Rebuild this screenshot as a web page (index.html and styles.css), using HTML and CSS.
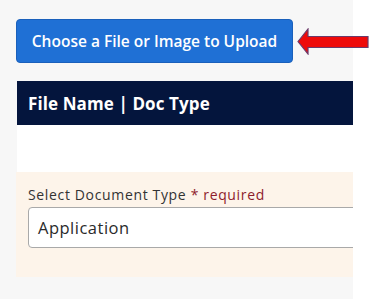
FILE: index.html
```html
<!DOCTYPE html>
<html lang="en">
<head>
<meta charset="utf-8">
<title>Upload</title>
<link rel="stylesheet" href="styles.css">
</head>
<body>
<div class="page">
  <div class="upload-row">
    <button class="upload-btn" type="button">Choose a File or Image to Upload</button>
    <svg class="arrow" width="72" height="27" viewBox="0 0 72 27" aria-hidden="true">
      <polygon points="1,13.5 11,1 11,8.5 71,8.5 71,19.5 11,19.5 11,26" fill="#ee0a0a" stroke="#6b3a6a" stroke-width="1.2" stroke-linejoin="miter"/>
    </svg>
  </div>
  <div class="table-head">File Name | Doc Type</div>
  <div class="spacer"></div>
  <div class="doc-panel">
    <label class="doc-label" for="doctype">Select Document Type <span class="req">* required</span></label>
    <div class="select-box" id="doctype">Application</div>
  </div>
</div>
</body>
</html>
```
FILE: styles.css
```css
html, body {
  margin: 0;
  padding: 0;
  background: #ffffff;
}
body {
  width: 373px;
  height: 299px;
  overflow: hidden;
  font-family: "Open Sans", "Liberation Sans", sans-serif;
}
.page {
  width: 353px;
  height: 299px;
  background: #f7f7f7;
  padding: 19px 0 0 16px;
  box-sizing: border-box;
  display: flex;
  flex-direction: column;
}
.upload-row {
  display: flex;
  align-items: center;
  gap: 4px;
  width: 360px;
}
.upload-btn {
  width: 277px;
  height: 44px;
  flex: none;
  background: #1f70d5;
  border: 1px solid #1a60bb;
  border-radius: 4px;
  color: #ffffff;
  font-family: "Open Sans", "Liberation Sans", sans-serif;
  font-size: 15.5px;
  font-weight: 600;
  padding: 0;
  margin: 0;
}
.arrow {
  flex: none;
  margin-top: 1px;
}
.table-head {
  margin-top: 18px;
  margin-left: 1px;
  height: 44px;
  background: #04153d;
  color: #ffffff;
  font-size: 17px;
  font-weight: 700;
  display: flex;
  align-items: center;
  padding-left: 11px;
  letter-spacing: 0.1px;
}
.spacer {
  height: 47px;
  margin-left: 1px;
  background: #ffffff;
}
.doc-panel {
  height: 105px;
  background: #fdf4ea;
  padding: 13px 0 0 12px;
  box-sizing: border-box;
  overflow: hidden;
}
.doc-label {
  display: block;
  font-size: 14px;
  color: #333333;
  line-height: 19px;
  margin-bottom: 3px;
  letter-spacing: 0.65px;
}
.req {
  color: #8e1c2c;
}
.select-box {
  width: 360px;
  height: 41px;
  box-sizing: border-box;
  background: #ffffff;
  border: 1px solid #a9a9a9;
  border-radius: 4px;
  font-size: 16.5px;
  letter-spacing: 0.5px;
  color: #2a2a2a;
  display: flex;
  align-items: center;
  padding-left: 9px;
}
```
